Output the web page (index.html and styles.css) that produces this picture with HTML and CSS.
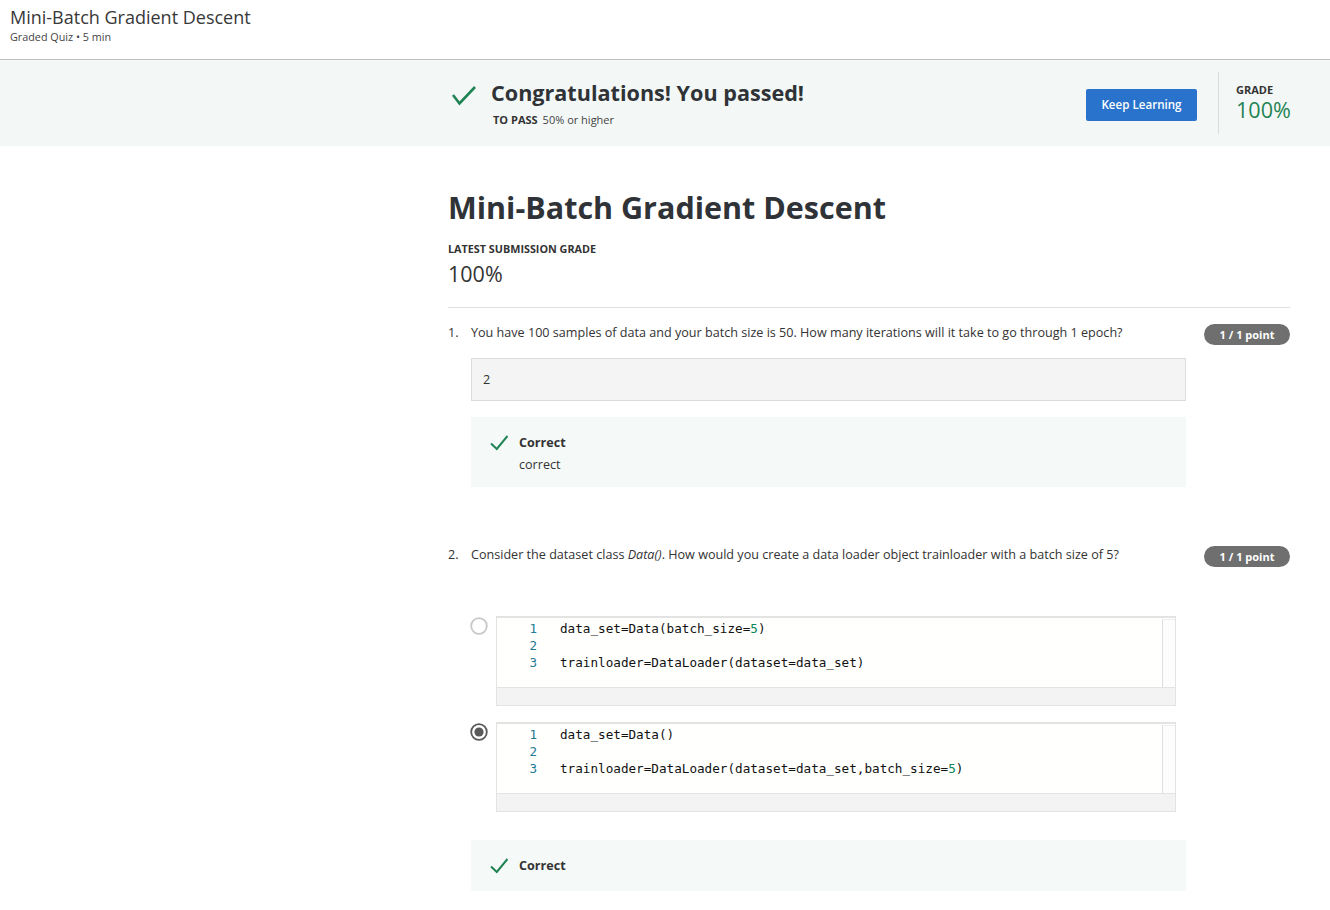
FILE: index.html
```html
<!DOCTYPE html>
<html lang="en">
<head>
<meta charset="utf-8">
<title>Mini-Batch Gradient Descent</title>
<link rel="stylesheet" href="styles.css">
</head>
<body>
<header class="topbar">
  <div class="topbar-title">Mini-Batch Gradient Descent</div>
  <div class="topbar-sub">Graded Quiz • 5 min</div>
</header>

<section class="banner">
  <div class="banner-inner">
    <div class="pass">
      <svg class="pass-icon" width="24" height="24" viewBox="0 0 24 24"><polyline points="1,12 7.5,20.5 23,4" fill="none" stroke="#1f8354" stroke-width="2.6"/></svg>
      <div class="pass-text">
        <div class="pass-title">Congratulations! You passed!</div>
        <div class="pass-sub"><span class="pass-label">TO PASS</span>50% or higher</div>
      </div>
    </div>
    <button class="btn">Keep Learning</button>
    <div class="vdivider"></div>
    <div class="grade">
      <div class="grade-label">GRADE</div>
      <div class="grade-value">100%</div>
    </div>
  </div>
</section>

<main class="main">
  <h1 class="quiz-title">Mini-Batch Gradient Descent</h1>
  <div class="latest-label">LATEST SUBMISSION GRADE</div>
  <div class="latest-value">100%</div>
  <hr class="rule">

  <div class="question q1">
    <div class="q-row">
      <div class="q-num">1.</div>
      <div class="q-text">You have 100 samples of data and your batch size is 50. How many iterations will it take to go through 1 epoch?</div>
      <div class="badge">1 / 1 point</div>
    </div>
    <div class="q-body">
      <div class="answer-box">2</div>
      <div class="feedback">
        <svg class="fb-icon" width="18" height="18" viewBox="0 0 18 18"><polyline points="1,10.5 6.8,16 17.5,3" fill="none" stroke="#1f8354" stroke-width="2"/></svg>
        <div class="fb-text">
          <div class="fb-title">Correct</div>
          <div class="fb-note">correct</div>
        </div>
      </div>
    </div>
  </div>

  <div class="question q2">
    <div class="q-row">
      <div class="q-num">2.</div>
      <div class="q-text">Consider the dataset class <em>Data()</em>. How would you create a data loader object trainloader with a batch size of 5?</div>
      <div class="badge">1 / 1 point</div>
    </div>
    <div class="options">
      <div class="option">
        <svg class="radio" width="18" height="18" viewBox="0 0 18 18"><circle cx="9" cy="9" r="7.8" fill="#fff" stroke="#c8c8c8" stroke-width="1.8"/></svg>
        <div class="code">
          <div class="code-main">
            <div class="code-lines">
              <div class="line"><span class="ln">1</span><span class="src">data_set=Data(batch_size=<span class="num">5</span>)</span></div>
              <div class="line"><span class="ln">2</span><span class="src"></span></div>
              <div class="line"><span class="ln">3</span><span class="src">trainloader=DataLoader(dataset=data_set)</span></div>
            </div>
            <div class="vscroll"></div>
          </div>
          <div class="hscroll"></div>
        </div>
      </div>
      <div class="option">
        <svg class="radio" width="18" height="18" viewBox="0 0 18 18"><circle cx="9" cy="9" r="7.8" fill="#fff" stroke="#5a5a5a" stroke-width="1.8"/><circle cx="9" cy="9" r="4.6" fill="#5a5a5a"/></svg>
        <div class="code">
          <div class="code-main">
            <div class="code-lines">
              <div class="line"><span class="ln">1</span><span class="src">data_set=Data()</span></div>
              <div class="line"><span class="ln">2</span><span class="src"></span></div>
              <div class="line"><span class="ln">3</span><span class="src">trainloader=DataLoader(dataset=data_set,batch_size=<span class="num">5</span>)</span></div>
            </div>
            <div class="vscroll"></div>
          </div>
          <div class="hscroll"></div>
        </div>
      </div>
    </div>
    <div class="q-body">
      <div class="feedback short">
        <svg class="fb-icon" width="18" height="18" viewBox="0 0 18 18"><polyline points="1,10.5 6.8,16 17.5,3" fill="none" stroke="#1f8354" stroke-width="2"/></svg>
        <div class="fb-text">
          <div class="fb-title">Correct</div>
        </div>
      </div>
    </div>
  </div>
</main>
</body>
</html>
```

FILE: styles.css
```css
* { box-sizing: border-box; }

html, body {
  margin: 0;
  padding: 0;
  background: #fff;
  font-family: "Open Sans", "Noto Sans", sans-serif;
  color: #333;
}

.topbar {
  height: 60px;
  padding: 6px 10px 0;
  border-bottom: 1px solid #bdbdbd;
}

.topbar-title {
  font-size: 18px;
  line-height: 22px;
  color: #383838;
}

.topbar-sub {
  font-size: 10.8px;
  line-height: 16px;
  margin-top: 1px;
  color: #444;
}

.banner {
  background: #f3f8f6;
  height: 86px;
}

.banner-inner {
  margin-left: 448px;
  width: 842px;
  height: 86px;
  padding: 12px 0;
  display: flex;
  align-items: center;
}

.pass {
  flex: 1;
  display: flex;
  align-items: flex-start;
  padding-left: 4px;
}

.pass-icon {
  margin-top: 5px;
  margin-right: 15px;
  flex: none;
}

.pass-title {
  font-size: 21.6px;
  line-height: 30px;
  font-weight: 700;
  color: #2f3337;
}

.pass-sub {
  font-size: 11px;
  line-height: 16px;
  margin-top: 4px;
  padding-left: 2px;
  color: #444;
}

.pass-label {
  font-weight: 700;
  color: #333;
  margin-right: 5px;
}

.btn {
  font-family: inherit;
  font-size: 11.6px;
  font-weight: 600;
  color: #fff;
  background: #2a73cc;
  border: none;
  border-radius: 2px;
  width: 111px;
  height: 32px;
  padding: 0;
  margin-right: 21px;
  margin-top: 3px;
}

.vdivider {
  width: 1px;
  align-self: stretch;
  background: #dcdcdc;
}

.grade {
  width: 54px;
  margin-left: 17px;
  margin-top: -2px;
}

.grade-label {
  font-size: 11px;
  line-height: 15px;
  font-weight: 700;
  color: #333;
}

.grade-value {
  font-size: 21.6px;
  line-height: 26px;
  color: #1f8354;
}

.main {
  margin-left: 448px;
  width: 842px;
  padding-top: 41px;
  padding-bottom: 20px;
}

.quiz-title {
  margin: 0;
  font-size: 30.5px;
  line-height: 40px;
  font-weight: 700;
  color: #2f3337;
}

.latest-label {
  margin-top: 14px;
  font-size: 10.8px;
  line-height: 16px;
  font-weight: 700;
  color: #333;
}

.latest-value {
  margin-top: 2px;
  font-size: 21.5px;
  line-height: 30px;
  color: #333;
}

.rule {
  margin: 18px 0 0;
  border: 0;
  border-top: 1px solid #e1e1e1;
}

.question.q1 { margin-top: 14px; }
.question.q2 { margin-top: 57px; }

.q-row {
  display: flex;
  align-items: flex-start;
  height: 23px;
}

.q-num {
  width: 23px;
  flex: none;
  font-size: 12.6px;
  line-height: 20px;
  padding-top: 1px;
}

.q-text {
  flex: 1;
  font-size: 12.6px;
  line-height: 20px;
  padding-top: 1px;
  color: #333;
}

.badge {
  flex: none;
  margin-top: 2px;
  width: 86px;
  height: 21px;
  border-radius: 11px;
  background: #6f6f6f;
  color: #fff;
  font-size: 11px;
  font-weight: 700;
  line-height: 21px;
  text-align: center;
}

.q-body {
  margin-left: 23px;
  width: 715px;
}

.answer-box {
  margin-top: 13px;
  height: 43px;
  background: #f4f4f4;
  border: 1px solid #dcdcdc;
  padding: 0 11px;
  font-size: 12.6px;
  line-height: 41px;
}

.feedback {
  margin-top: 16px;
  height: 70px;
  background: #f5f9f8;
  padding: 15px 0 0 19px;
  display: flex;
  align-items: flex-start;
}

.feedback.short {
  margin-top: 28px;
  height: 51px;
  padding-top: 15px;
}

.fb-icon {
  flex: none;
  margin-top: 1px;
  margin-right: 11px;
}

.fb-title {
  font-size: 12.6px;
  line-height: 22px;
  font-weight: 700;
  color: #333;
}

.fb-note {
  font-size: 12.6px;
  line-height: 22px;
  color: #333;
}

.options {
  margin-top: 49px;
  display: flex;
  flex-direction: column;
  gap: 16px;
}

.option {
  display: flex;
  align-items: flex-start;
  padding-left: 22px;
}

.radio {
  flex: none;
  margin-top: 1px;
  margin-right: 8px;
}

.code {
  width: 680px;
  height: 90px;
  border: 1px solid #e3e3e3;
  border-top-width: 2px;
  display: flex;
  flex-direction: column;
  background: #fffffe;
}

.code-main {
  flex: 1;
  display: flex;
}

.code-lines {
  flex: 1;
  padding-top: 2px;
  font-family: "DejaVu Sans Mono", "Liberation Mono", monospace;
  font-size: 12.65px;
  line-height: 17px;
  color: #111;
}

.line {
  display: flex;
  white-space: pre;
  height: 17px;
}

.ln {
  width: 40px;
  text-align: right;
  color: #237893;
  margin-right: 23px;
}

.num { color: #098658; }

.vscroll {
  width: 13px;
  border-left: 1px solid #dedede;
  border-top: 1px solid #eee;
  margin-top: 1px;
  background: #fdfdfd;
}

.hscroll {
  height: 18px;
  background: #f3f3f3;
  border-top: 1px solid #e3e3e3;
}
```
